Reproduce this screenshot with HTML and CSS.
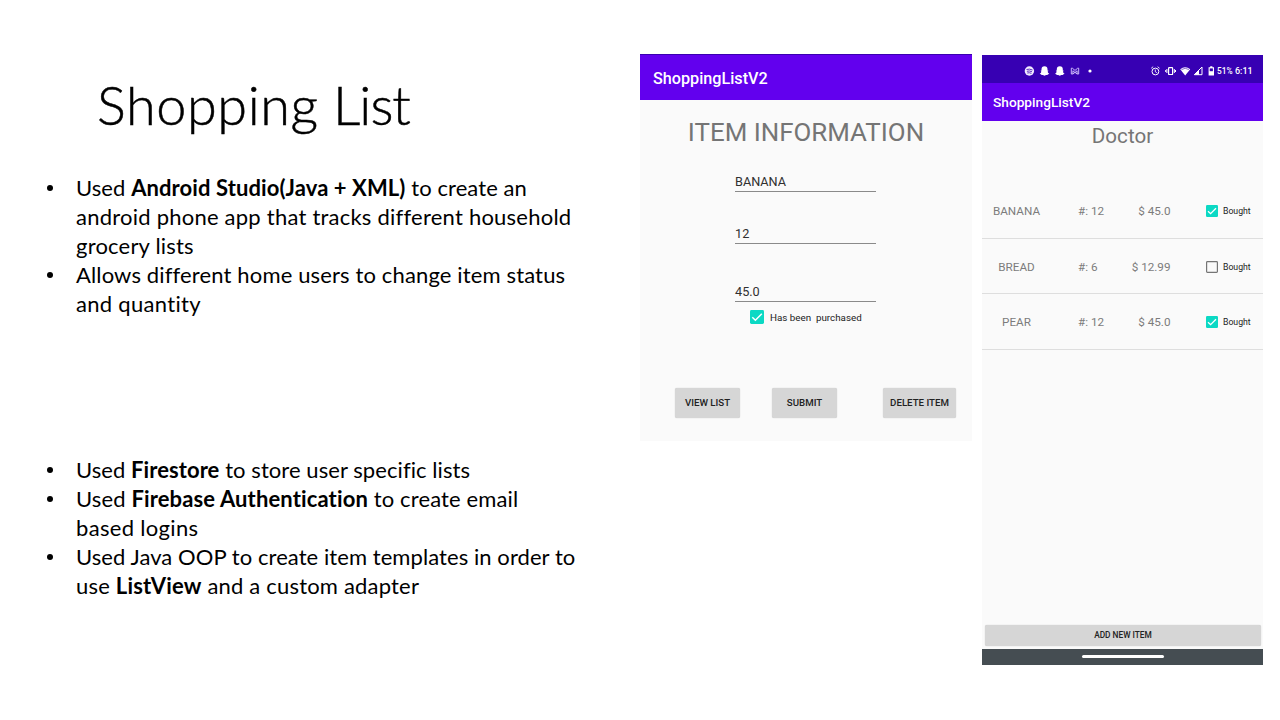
FILE: index.html
```html
<!DOCTYPE html>
<html lang="en">
<head>
<meta charset="utf-8">
<title>Shopping List</title>
<link rel="stylesheet" href="styles.css">
</head>
<body>
<main class="slide">
  <section class="notes">
    <h1 class="title">Shopping <span class="title-end">List</span></h1>
    <ul class="points">
      <li><span class="line l1">Used <b>Android Studio(Java + XML)</b> to create an</span><span class="line l2">android phone app that tracks different household</span><span class="line l3">grocery lists</span></li>
      <li><span class="line l4">Allows different home users to change item status</span><span class="line l5">and quantity</span></li>
    </ul>
    <ul class="points points-second">
      <li><span class="line l6">Used <b>Firestore</b> to store user specific lists</span></li>
      <li><span class="line l7">Used <b>Firebase Authentication</b> to create email</span><span class="line l8">based logins</span></li>
      <li><span class="line l9">Used Java OOP to create item templates in order to</span><span class="line l10">use <b>ListView</b> and a custom adapter</span></li>
    </ul>
  </section>

  <section class="form-screen">
    <header class="form-bar">ShoppingListV2</header>
    <h2 class="form-title">ITEM INFORMATION</h2>
    <div class="fields">
      <div class="field">BANANA</div>
      <div class="field field-qty">12</div>
      <div class="field field-price">45.0</div>
    </div>
    <div class="purchased">
      <svg class="box" viewBox="0 0 14 14"><rect width="14" height="14" rx="1.4" fill="#0bd9c4"/><path d="M2.3 7.2 5.4 10.2 11.8 3.8" fill="none" stroke="#fff" stroke-width="1.5"/></svg>
      <span>Has been&nbsp; purchased</span>
    </div>
    <div class="actions">
      <span class="btn">VIEW LIST</span>
      <span class="btn btn-submit">SUBMIT</span>
      <span class="btn btn-delete">DELETE ITEM</span>
    </div>
  </section>

  <section class="phone">
    <div class="status">
      <svg class="notif" width="72" height="12" viewBox="0 0 72 12">
        <circle cx="5.4" cy="6" r="4.7" fill="#f1ecff"/>
        <path d="M2.5 4.5Q5.5 3.5 8.5 5M2.9 6.3Q5.5 5.4 8 6.8M3.3 8Q5.4 7.3 7.4 8.4" fill="none" stroke="#3700b3" stroke-width=".8"/>
        <g fill="#fff">
          <path id="ghost" d="M20.5 1.3c2 0 3 1.300 3 3v1.200l1 .3-.9.9c.3 1 .9 1.600 1.700 2l-1.500.7-.4.6-1.300-.1-1.600.9-1.600-.9-1.300.1-.4-.6-1.500-.7c.8-.4 1.400-1 1.700-2l-.9-.9 1-.3V4.300c0-1.700 1-3 3-3z"/>
          <use href="#ghost" x="15.300"/>
        </g>
        <path d="M47.300 3.200v5.800h1.600V5.800L51 7.500l2.100-1.700V9h1.600V3.200h-1L51 5.400 48.300 3.200zM49 9l2-1.700L53 9" fill="none" stroke="#d9ccff" stroke-width=".9"/>
        <circle cx="66" cy="6" r="1.600" fill="#fff"/>
      </svg>
      <svg class="system" width="65" height="12" viewBox="0 0 65 12">
        <g fill="none" stroke="#fff">
          <circle cx="5.400" cy="6.500" r="3.400" stroke-width="1"/>
          <path d="M5.300 4.500V6.700l1.500 1M1.200 3.300 3.200 1.700M9.600 3.300 7.600 1.700" stroke-width=".9"/>
          <rect x="18.600" y="2.700" width="4" height="6.800" rx=".6" stroke-width="1.200"/>
          <path d="M16.900 4v4M24.300 4v4M15.700 5v2M25.500 5v2" stroke-width="1"/>
          <path d="M44.300 9.700H52V2z" stroke-width="1"/>
        </g>
        <path d="M30.200 4.200Q35.200.4 40.200 4.200L35.200 10.400z" fill="#fff"/>
        <path d="M31.500 4.600Q35.200 2 38.900 4.600" fill="none" stroke="#3700b3" stroke-width=".6"/>
        <path d="M44.300 9.700 49 5v4.700z" fill="#fff"/>
        <path d="M60.200 1.300h2.200v1H64v8.300h-5.400V2.300h1.600z" fill="#fff"/><path d="M59.700 3.400h3.200v2.800h-3.200z" fill="#3700b3"/>
      </svg>
      <span class="battery">51%</span><span class="clock">6:11</span>
    </div>
    <header class="phone-bar">ShoppingListV2</header>
    <h2 class="list-title">Doctor</h2>
    <div class="rows">
      <div class="row"><span class="name">BANANA</span><span class="qty">#: 12</span><span class="price">$ 45.0</span>
        <svg class="box-sm" viewBox="0 0 12 12"><rect width="12" height="12" rx="1.200" fill="#0bd9c4"/><path d="M2 6.200 4.600 8.700 10 3.300" fill="none" stroke="#fff" stroke-width="1.300"/></svg><span class="bought">Bought</span></div>
      <div class="row"><span class="name">BREAD</span><span class="qty">#: 6</span><span class="price">$ 12.99</span>
        <svg class="box-sm" viewBox="0 0 12 12"><rect x=".6" y=".6" width="10.800" height="10.800" rx=".8" fill="none" stroke="#757575" stroke-width="1.200"/></svg><span class="bought">Bought</span></div>
      <div class="row"><span class="name">PEAR</span><span class="qty">#: 12</span><span class="price">$ 45.0</span>
        <svg class="box-sm" viewBox="0 0 12 12"><rect width="12" height="12" rx="1.200" fill="#0bd9c4"/><path d="M2 6.200 4.600 8.700 10 3.300" fill="none" stroke="#fff" stroke-width="1.300"/></svg><span class="bought">Bought</span></div>
    </div>
    <div class="add">ADD NEW ITEM</div>
    <div class="nav"><i class="handle"></i></div>
  </section>
</main>
</body>
</html>
```
FILE: styles.css
```css
* { box-sizing: border-box; }
body { margin: 0; background: #fff; }
.slide {
  display: grid;
  grid-template-columns: 640px 332px 291px;
  align-items: start;
  width: 1280px;
  height: 720px;
  overflow: hidden;
  font-family: Roboto, "Liberation Sans", sans-serif;
}
h1, h2, ul { margin: 0; padding: 0; font-weight: 400; }

.notes { color: #000; font-family: Lato, "Open Sans", sans-serif; padding: 72px 0 0 45px; }
.title { padding-left: 52px; height: 101px; font-size: 54px; line-height: 66px; font-weight: 300; letter-spacing: .6px; word-spacing: -1px; white-space: nowrap; -webkit-text-stroke: .5px #000; }
.title-end { letter-spacing: -1px; }
.points { list-style: none; font-size: 22px; line-height: 29px; }
.points li { position: relative; padding-left: 31px; }
.points li::before { content: ""; position: absolute; left: 2px; top: 12px; width: 6px; height: 6px; border-radius: 50%; background: #000; }
.points-second { padding-top: 137px; }
.line { display: block; width: max-content; white-space: nowrap; }
.l1 { letter-spacing: .09px; }
.l2 { letter-spacing: .23px; }
.l3 { letter-spacing: .2px; }
.l4 { letter-spacing: .14px; }
.l5 { letter-spacing: .3px; }
.l6 { letter-spacing: .07px; }
.l7 { letter-spacing: .13px; }
.l8 { letter-spacing: .32px; }
.l9 { letter-spacing: .07px; }
.l10 { letter-spacing: .19px; }

.form-screen { margin-top: 54px; height: 387px; background: #fafafa; }
.form-bar { height: 46px; border-top: 1px solid #3a00b0; background: #6200ee; color: #fff; padding-left: 13px; font-size: 16.2px; font-weight: 500; line-height: 47px; }
.form-title { margin-top: 16px; text-align: center; font-size: 25.9px; line-height: 32px; color: #757575; }
.fields { width: 141px; margin: 24px 0 0 95px; font-size: 12.7px; line-height: 20px; color: #303030; }
.field { height: 20px; border-bottom: 1px solid #8a8a8a; }
.field-qty { margin-top: 32px; }
.field-price { margin-top: 38px; }
.purchased { display: flex; align-items: center; gap: 6px; margin: 7px 0 0 110px; height: 16px; font-size: 9.8px; color: #222; }
.box { width: 14px; height: 14px; }
.actions { display: flex; margin: 63px 0 0 35px; }
.btn { width: 65px; height: 30px; border-radius: 2px; background: #d6d6d6; box-shadow: 0 0 1px #bbb; text-align: center; font-size: 9.7px; font-weight: 500; line-height: 30px; color: #222; white-space: nowrap; }
.btn-submit { margin-left: 32px; }
.btn-delete { width: 73px; margin-left: 46px; }

.phone { margin: 55px 0 0 10px; width: 281px; height: 610px; display: flex; flex-direction: column; background: #fafafa; }
.status { display: flex; align-items: center; height: 28px; padding: 4px 0 0 42px; background: #3700b3; color: #fff; font-size: 9px; font-weight: 500; line-height: 12px; }
.system { margin-left: 54px; }
.battery { margin-left: 2px; width: 18px; font-size: 8.3px; }
.clock { font-size: 9px; }
.phone-bar { height: 38px; background: #6200ee; color: #fff; padding-left: 11px; font-size: 13.7px; font-weight: 500; line-height: 38px; }
.list-title { text-align: center; font-size: 20.6px; line-height: 30px; height: 33px; color: #757575; }
.rows { margin-top: 29px; }
.row { display: flex; align-items: center; height: 55.5px; padding-top: 1.5px; border-bottom: 1px solid #dedede; font-size: 11.7px; color: #7c7c7c; white-space: nowrap; }
.name { width: 69px; text-align: center; }
.qty { width: 48px; margin-left: 27px; }
.price { width: 44.5px; text-align: right; }
.box-sm { width: 12px; height: 12px; margin-left: 35.5px; }
.bought { margin-left: 5px; font-size: 8.7px; color: #222; }
.add { margin: auto 2px 0 3px; height: 21px; border-radius: 2px; background: #d6d6d6; box-shadow: 0 0 1px #bbb; text-align: center; font-size: 8.3px; font-weight: 500; line-height: 21px; color: #222; }
.nav { margin-top: 3px; height: 16px; padding-bottom: 1px; background: #454d52; display: flex; align-items: center; justify-content: center; }
.handle { width: 82px; height: 3px; border-radius: 2px; background: #fff; }
```
